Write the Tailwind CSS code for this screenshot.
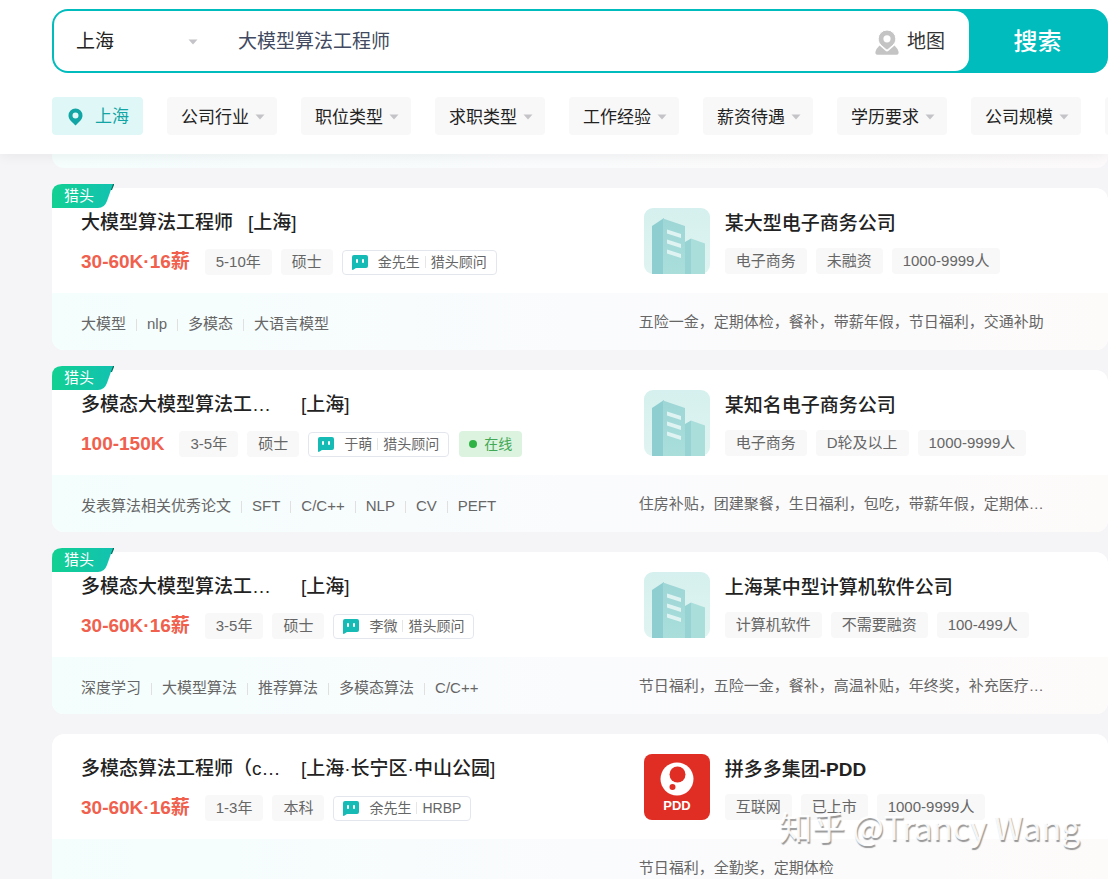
<!DOCTYPE html>
<html lang="zh-CN">
<head>
<meta charset="utf-8">
<meta name="viewport" content="width=device-width, initial-scale=1">
<title>大模型算法工程师 - 职位搜索</title>
<script src="https://cdn.jsdelivr.net/npm/@tailwindcss/browser@4"></script>
</head>
<body class="h-screen overflow-hidden bg-[#f5f5f8] font-['Liberation_Sans','Noto_Sans_CJK_SC',sans-serif] text-[#222]">

<svg class="absolute size-0" aria-hidden="true">
  <defs>
    <linearGradient id="ribbon-fill" x1="0" y1="0" x2="1" y2="0">
      <stop offset="0" stop-color="#12d092"/><stop offset="1" stop-color="#12c2b0"/>
    </linearGradient>
    <linearGradient id="logo-bg" x1="0" y1="0" x2="0" y2="1">
      <stop offset="0" stop-color="#d5f0ee"/><stop offset="1" stop-color="#e0f4f1"/>
    </linearGradient>
    <linearGradient id="tower" x1="0" y1="0" x2="0" y2="1">
      <stop offset="0" stop-color="#9ed6d6"/><stop offset="1" stop-color="#a9dedb"/>
    </linearGradient>
  </defs>
  <symbol id="arrow" viewBox="0 0 10 6"><path d="M0.5 0.5h9L5 5.5z" fill="#c4c4c8"/></symbol>
  <symbol id="ribbon" viewBox="0 0 62 24">
    <path d="M59 0h3v1l-2 5h-3z" fill="#0a6a5a"/>
    <path d="M10 0H61L55 17Q52.500 24 46 24H0V10Q0 0 10 0Z" fill="url(#ribbon-fill)"/>
  </symbol>
  <symbol id="chat" viewBox="0 0 16 15">
    <path d="M2 0h12a2 2 0 0 1 2 2v9a2 2 0 0 1-2 2H4L0.800 15Q0 15 0 14.200V2a2 2 0 0 1 2-2z" fill="#17bbb5"/>
    <rect x="4" y="4" width="2" height="4" rx="1" fill="#fff"/><rect x="10" y="4" width="2" height="4" rx="1" fill="#fff"/>
  </symbol>
  <symbol id="building" viewBox="0 0 66 66">
    <rect width="66" height="66" rx="9" fill="url(#logo-bg)"/>
    <path d="M8 66V18L20 10V66z" fill="#8fced0"/>
    <path d="M19 10.500L41 18V66H19z" fill="url(#tower)"/>
    <path d="M41 34L47 30.500V66H41z" fill="#97d3d3"/>
    <path d="M47 30.500L61 35.500V66H47z" fill="#a9dedb"/>
    <path d="M23 21.500l14 4.500v4l-14-4.500zM23 31.500l14 4.500v4l-14-4.500zM23 41.500l14 4.500v4l-14-4.500z" fill="#dff4f2"/>
  </symbol>
</svg>

<div class="relative flex h-full flex-col overflow-hidden">
  <header class="relative z-10 shrink-0 bg-white pt-[9px] pb-[19px] pl-[52px] shadow-[0_2px_12px_rgba(0,0,0,0.06)]">
    <form class="flex h-16 rounded-2xl bg-[#00bcbd] p-[2px]" onsubmit="return false">
      <div class="flex min-w-0 flex-1 items-center rounded-[14px] bg-white pt-[2px] pr-6 pl-[22px]">
        <label class="grid w-[122px] shrink-0 items-center">
          <select aria-label="城市" class="col-start-1 row-start-1 w-full appearance-none bg-transparent text-[19px] leading-7 outline-none"><option>上海</option></select>
          <svg class="pointer-events-none col-start-1 row-start-1 h-[6px] w-[10px] justify-self-end"><use href="#arrow"/></svg>
        </label>
        <input type="text" aria-label="搜索职位" value="大模型算法工程师" class="ml-10 min-w-0 flex-1 text-[19px] leading-7 text-[#414a60] outline-none">
        <a href="#map" class="flex items-center gap-2 text-[19px] leading-7 text-[#333]">
          <svg class="h-[25px] w-6" viewBox="0 0 24 25" fill="#c4c4c4">
            <path d="M4.500 15.500L1.500 19Q0 22 0.500 23.500Q1 24.800 2.500 24.800H21.500Q23 24.800 23.500 23.500Q24 22 22.500 19L19.500 15.500L13.500 20.800Q12 22 10.500 20.800Z"/>
            <path d="M12 0a8.800 8.800 0 0 1 8.800 8.800c0 3-1.300 4.800-3 6.500L12.900 19.600a1.400 1.400 0 0 1-1.800 0L6.200 15.300C4.500 13.600 3.200 11.800 3.200 8.800A8.800 8.800 0 0 1 12 0z" stroke="#fff" stroke-width="1"/>
            <circle cx="12" cy="8.800" r="3.600" fill="#fff"/>
          </svg>
          地图
        </a>
      </div>
      <button type="submit" class="w-[137px] shrink-0 pt-[2px] text-2xl font-medium text-white">搜索</button>
    </form>

    <div class="mt-6 flex gap-6 overflow-hidden text-[17px] leading-[38px]">
      <button class="flex h-[38px] w-[91px] shrink-0 items-center gap-3 rounded bg-[#e0f7f7] pt-[2px] pl-4 text-[#12a5a5]">
        <svg class="h-[18px] w-[15px]" viewBox="0 0 15 18" fill="#12a5a5"><path fill-rule="evenodd" d="M7.500 0.500a7 7 0 0 1 7 7c0 3.500-2.500 5.500-4.500 7.500L7.500 17.500L5 15C3 13 0.500 11 0.500 7.500a7 7 0 0 1 7-7zm0 4a3 3 0 1 0 0 6a3 3 0 0 0 0-6z"/></svg>
        上海
      </button>
      <label class="grid h-[38px] w-[110px] shrink-0 items-center rounded bg-[#f8f8f8]"><select aria-label="公司行业" class="col-start-1 row-start-1 h-full w-full appearance-none bg-transparent pt-[2px] pl-[14px] outline-none"><option>公司行业</option></select><svg class="pointer-events-none col-start-1 row-start-1 mr-3 h-[6px] w-[10px] justify-self-end"><use href="#arrow"/></svg></label>
      <label class="grid h-[38px] w-[110px] shrink-0 items-center rounded bg-[#f8f8f8]"><select aria-label="职位类型" class="col-start-1 row-start-1 h-full w-full appearance-none bg-transparent pt-[2px] pl-[14px] outline-none"><option>职位类型</option></select><svg class="pointer-events-none col-start-1 row-start-1 mr-3 h-[6px] w-[10px] justify-self-end"><use href="#arrow"/></svg></label>
      <label class="grid h-[38px] w-[110px] shrink-0 items-center rounded bg-[#f8f8f8]"><select aria-label="求职类型" class="col-start-1 row-start-1 h-full w-full appearance-none bg-transparent pt-[2px] pl-[14px] outline-none"><option>求职类型</option></select><svg class="pointer-events-none col-start-1 row-start-1 mr-3 h-[6px] w-[10px] justify-self-end"><use href="#arrow"/></svg></label>
      <label class="grid h-[38px] w-[110px] shrink-0 items-center rounded bg-[#f8f8f8]"><select aria-label="工作经验" class="col-start-1 row-start-1 h-full w-full appearance-none bg-transparent pt-[2px] pl-[14px] outline-none"><option>工作经验</option></select><svg class="pointer-events-none col-start-1 row-start-1 mr-3 h-[6px] w-[10px] justify-self-end"><use href="#arrow"/></svg></label>
      <label class="grid h-[38px] w-[110px] shrink-0 items-center rounded bg-[#f8f8f8]"><select aria-label="薪资待遇" class="col-start-1 row-start-1 h-full w-full appearance-none bg-transparent pt-[2px] pl-[14px] outline-none"><option>薪资待遇</option></select><svg class="pointer-events-none col-start-1 row-start-1 mr-3 h-[6px] w-[10px] justify-self-end"><use href="#arrow"/></svg></label>
      <label class="grid h-[38px] w-[110px] shrink-0 items-center rounded bg-[#f8f8f8]"><select aria-label="学历要求" class="col-start-1 row-start-1 h-full w-full appearance-none bg-transparent pt-[2px] pl-[14px] outline-none"><option>学历要求</option></select><svg class="pointer-events-none col-start-1 row-start-1 mr-3 h-[6px] w-[10px] justify-self-end"><use href="#arrow"/></svg></label>
      <label class="grid h-[38px] w-[110px] shrink-0 items-center rounded bg-[#f8f8f8]"><select aria-label="公司规模" class="col-start-1 row-start-1 h-full w-full appearance-none bg-transparent pt-[2px] pl-[14px] outline-none"><option>公司规模</option></select><svg class="pointer-events-none col-start-1 row-start-1 mr-3 h-[6px] w-[10px] justify-self-end"><use href="#arrow"/></svg></label>
      <span class="h-[38px] w-[110px] shrink-0 rounded bg-[#f8f8f8]"></span>
    </div>
  </header>

  <main class="flex flex-col gap-5 pl-[52px] text-[15px] text-[#666]">
    <div class="h-[14px] shrink-0 rounded-b-xl bg-linear-to-r from-[#f5fdfd] via-[#fafbfc] to-[#fcfafa]"></div>

    <article class="relative shrink-0 rounded-xl bg-white">
      <div class="absolute -top-[5px] left-0 grid h-6 w-[62px] items-center text-white">
        <svg class="col-start-1 row-start-1 h-6 w-[62px]"><use href="#ribbon"/></svg>
        <span class="col-start-1 row-start-1 pt-px pl-3 leading-6">猎头</span>
      </div>
      <div class="grid h-[105px] grid-cols-[5fr_4fr]">
        <div class="pt-[21px] pl-[29px]">
          <h3 class="flex gap-[15px] text-[19px] leading-7 font-medium text-[#222]"><a href="#job1">大模型算法工程师</a><span>[上海]</span></h3>
          <div class="mt-3 flex h-[26px] items-center">
            <strong class="mr-[15px] pt-px text-[19px] font-semibold text-[#f0604d]">30-60K·16薪</strong>
            <span class="mr-[9px] rounded bg-[#f8f8f8] px-[11px] leading-[26px]">5-10年</span>
            <span class="mr-[9px] rounded bg-[#f8f8f8] px-[11px] leading-[26px]">硕士</span>
            <a href="#chat1" class="flex h-[25px] items-center rounded border border-[#e3e7ed] px-[9px] text-sm"><svg class="mr-[10px] h-[15px] w-4"><use href="#chat"/></svg>金先生<i class="mx-[5px] h-3 w-px bg-[#e6e6e6]"></i>猎头顾问</a>
          </div>
        </div>
        <div class="flex gap-[15px] pt-5 pl-[5px]">
          <svg class="size-[66px] shrink-0"><use href="#building"/></svg>
          <div>
            <h3 class="pt-px text-[19px] leading-[30px] font-medium text-[#222]"><a href="#company1">某大型电子商务公司</a></h3>
            <div class="mt-[9px] flex gap-[9px] leading-[26px]"><span class="rounded bg-[#f8f8f8] px-[11px]">电子商务</span><span class="rounded bg-[#f8f8f8] px-[11px]">未融资</span><span class="rounded bg-[#f8f8f8] px-[11px]">1000-9999人</span></div>
          </div>
        </div>
      </div>
      <div class="grid h-[57px] grid-cols-[5fr_4fr] items-center rounded-b-xl bg-linear-to-r from-[#f4fefd] via-[#fafbfd] to-[#fdfbfa]">
        <div class="flex items-center pt-[6px] pl-[29px]">大模型<i class="mx-[10px] h-3 w-px bg-[#e0e0e0]"></i>nlp<i class="mx-[10px] h-3 w-px bg-[#e0e0e0]"></i>多模态<i class="mx-[10px] h-3 w-px bg-[#e0e0e0]"></i>大语言模型</div>
        <p class="pt-[2px]">五险一金，定期体检，餐补，带薪年假，节日福利，交通补助</p>
      </div>
    </article>

    <article class="relative shrink-0 rounded-xl bg-white">
      <div class="absolute -top-[5px] left-0 grid h-6 w-[62px] items-center text-white">
        <svg class="col-start-1 row-start-1 h-6 w-[62px]"><use href="#ribbon"/></svg>
        <span class="col-start-1 row-start-1 pt-px pl-3 leading-6">猎头</span>
      </div>
      <div class="grid h-[105px] grid-cols-[5fr_4fr]">
        <div class="pt-[21px] pl-[29px]">
          <h3 class="flex gap-[15px] text-[19px] leading-7 font-medium text-[#222]"><a href="#job2" class="w-[205px]">多模态大模型算法工…</a><span>[上海]</span></h3>
          <div class="mt-3 flex h-[26px] items-center">
            <strong class="mr-[15px] pt-px text-[19px] font-semibold text-[#f0604d]">100-150K</strong>
            <span class="mr-[9px] rounded bg-[#f8f8f8] px-[11px] leading-[26px]">3-5年</span>
            <span class="mr-[9px] rounded bg-[#f8f8f8] px-[11px] leading-[26px]">硕士</span>
            <a href="#chat2" class="flex h-[25px] items-center rounded border border-[#e3e7ed] px-[9px] text-sm"><svg class="mr-[10px] h-[15px] w-4"><use href="#chat"/></svg>于萌<i class="mx-[5px] h-3 w-px bg-[#e6e6e6]"></i>猎头顾问</a>
            <span class="ml-[10px] flex h-[26px] items-center gap-[7px] rounded bg-[#dcf3e0] px-[10px] text-sm text-[#43a854]"><i class="size-2 rounded-full bg-[#2fb344]"></i>在线</span>
          </div>
        </div>
        <div class="flex gap-[15px] pt-5 pl-[5px]">
          <svg class="size-[66px] shrink-0"><use href="#building"/></svg>
          <div>
            <h3 class="pt-px text-[19px] leading-[30px] font-medium text-[#222]"><a href="#company2">某知名电子商务公司</a></h3>
            <div class="mt-[9px] flex gap-[9px] leading-[26px]"><span class="rounded bg-[#f8f8f8] px-[11px]">电子商务</span><span class="rounded bg-[#f8f8f8] px-[11px]">D轮及以上</span><span class="rounded bg-[#f8f8f8] px-[11px]">1000-9999人</span></div>
          </div>
        </div>
      </div>
      <div class="grid h-[57px] grid-cols-[5fr_4fr] items-center rounded-b-xl bg-linear-to-r from-[#f4fefd] via-[#fafbfd] to-[#fdfbfa]">
        <div class="flex items-center pt-[6px] pl-[29px]">发表算法相关优秀论文<i class="mx-[10px] h-3 w-px bg-[#e0e0e0]"></i>SFT<i class="mx-[10px] h-3 w-px bg-[#e0e0e0]"></i>C/C++<i class="mx-[10px] h-3 w-px bg-[#e0e0e0]"></i>NLP<i class="mx-[10px] h-3 w-px bg-[#e0e0e0]"></i>CV<i class="mx-[10px] h-3 w-px bg-[#e0e0e0]"></i>PEFT</div>
        <p class="pt-[2px]">住房补贴，团建聚餐，生日福利，包吃，带薪年假，定期体…</p>
      </div>
    </article>

    <article class="relative shrink-0 rounded-xl bg-white">
      <div class="absolute -top-[5px] left-0 grid h-6 w-[62px] items-center text-white">
        <svg class="col-start-1 row-start-1 h-6 w-[62px]"><use href="#ribbon"/></svg>
        <span class="col-start-1 row-start-1 pt-px pl-3 leading-6">猎头</span>
      </div>
      <div class="grid h-[105px] grid-cols-[5fr_4fr]">
        <div class="pt-[21px] pl-[29px]">
          <h3 class="flex gap-[15px] text-[19px] leading-7 font-medium text-[#222]"><a href="#job3" class="w-[205px]">多模态大模型算法工…</a><span>[上海]</span></h3>
          <div class="mt-3 flex h-[26px] items-center">
            <strong class="mr-[15px] pt-px text-[19px] font-semibold text-[#f0604d]">30-60K·16薪</strong>
            <span class="mr-[9px] rounded bg-[#f8f8f8] px-[11px] leading-[26px]">3-5年</span>
            <span class="mr-[9px] rounded bg-[#f8f8f8] px-[11px] leading-[26px]">硕士</span>
            <a href="#chat3" class="flex h-[25px] items-center rounded border border-[#e3e7ed] px-[9px] text-sm"><svg class="mr-[10px] h-[15px] w-4"><use href="#chat"/></svg>李微<i class="mx-[5px] h-3 w-px bg-[#e6e6e6]"></i>猎头顾问</a>
          </div>
        </div>
        <div class="flex gap-[15px] pt-5 pl-[5px]">
          <svg class="size-[66px] shrink-0"><use href="#building"/></svg>
          <div>
            <h3 class="pt-px text-[19px] leading-[30px] font-medium text-[#222]"><a href="#company3">上海某中型计算机软件公司</a></h3>
            <div class="mt-[9px] flex gap-[9px] leading-[26px]"><span class="rounded bg-[#f8f8f8] px-[11px]">计算机软件</span><span class="rounded bg-[#f8f8f8] px-[11px]">不需要融资</span><span class="rounded bg-[#f8f8f8] px-[11px]">100-499人</span></div>
          </div>
        </div>
      </div>
      <div class="grid h-[57px] grid-cols-[5fr_4fr] items-center rounded-b-xl bg-linear-to-r from-[#f4fefd] via-[#fafbfd] to-[#fdfbfa]">
        <div class="flex items-center pt-[6px] pl-[29px]">深度学习<i class="mx-[10px] h-3 w-px bg-[#e0e0e0]"></i>大模型算法<i class="mx-[10px] h-3 w-px bg-[#e0e0e0]"></i>推荐算法<i class="mx-[10px] h-3 w-px bg-[#e0e0e0]"></i>多模态算法<i class="mx-[10px] h-3 w-px bg-[#e0e0e0]"></i>C/C++</div>
        <p class="pt-[2px]">节日福利，五险一金，餐补，高温补贴，年终奖，补充医疗…</p>
      </div>
    </article>

    <article class="relative shrink-0 rounded-xl bg-white">
      <div class="grid h-[105px] grid-cols-[5fr_4fr]">
        <div class="pt-[21px] pl-[29px]">
          <h3 class="flex gap-[15px] text-[19px] leading-7 font-medium text-[#222]"><a href="#job4" class="w-[205px]">多模态算法工程师（c…</a><span>[上海·长宁区·中山公园]</span></h3>
          <div class="mt-3 flex h-[26px] items-center">
            <strong class="mr-[15px] pt-px text-[19px] font-semibold text-[#f0604d]">30-60K·16薪</strong>
            <span class="mr-[9px] rounded bg-[#f8f8f8] px-[11px] leading-[26px]">1-3年</span>
            <span class="mr-[9px] rounded bg-[#f8f8f8] px-[11px] leading-[26px]">本科</span>
            <a href="#chat4" class="flex h-[25px] items-center rounded border border-[#e3e7ed] px-[9px] text-sm"><svg class="mr-[10px] h-[15px] w-4"><use href="#chat"/></svg>余先生<i class="mx-[5px] h-3 w-px bg-[#e6e6e6]"></i>HRBP</a>
          </div>
        </div>
        <div class="flex gap-[15px] pt-5 pl-[5px]">
          <svg class="size-[66px] shrink-0" viewBox="0 0 66 66" role="img" aria-label="PDD">
            <rect width="66" height="66" rx="8" fill="#e02e24"/>
            <circle cx="33" cy="25" r="16.500" fill="#fff"/><circle cx="33.500" cy="20.500" r="8" fill="#e02e24"/><circle cx="28.500" cy="33" r="3" fill="#e02e24"/>
            <text x="33" y="56" text-anchor="middle" font-size="13" font-weight="700" font-family="Liberation Sans, sans-serif" fill="#fff">PDD</text>
          </svg>
          <div>
            <h3 class="pt-px text-[19px] leading-[30px] font-medium text-[#222]"><a href="#company4">拼多多集团<b class="font-semibold">-PDD</b></a></h3>
            <div class="mt-[9px] flex gap-[9px] leading-[26px]"><span class="rounded bg-[#f8f8f8] px-[11px]">互联网</span><span class="rounded bg-[#f8f8f8] px-[11px]">已上市</span><span class="rounded bg-[#f8f8f8] px-[11px]">1000-9999人</span></div>
          </div>
        </div>
      </div>
      <div class="grid h-[57px] grid-cols-[5fr_4fr] items-center rounded-b-xl bg-linear-to-r from-[#f4fefd] via-[#fafbfd] to-[#fdfbfa]">
        <div></div>
        <p class="pt-[2px]">节日福利，全勤奖，定期体检</p>
      </div>
    </article>
  </main>

  <div class="pointer-events-none absolute right-7 bottom-8 z-20 font-['Noto_Sans_CJK_SC',sans-serif] text-[33px] leading-[42px] whitespace-nowrap text-white/90 [text-shadow:1px_2px_1px_rgba(0,0,0,0.4)]">知乎 @Trancy Wang</div>
</div>
</body>
</html>
